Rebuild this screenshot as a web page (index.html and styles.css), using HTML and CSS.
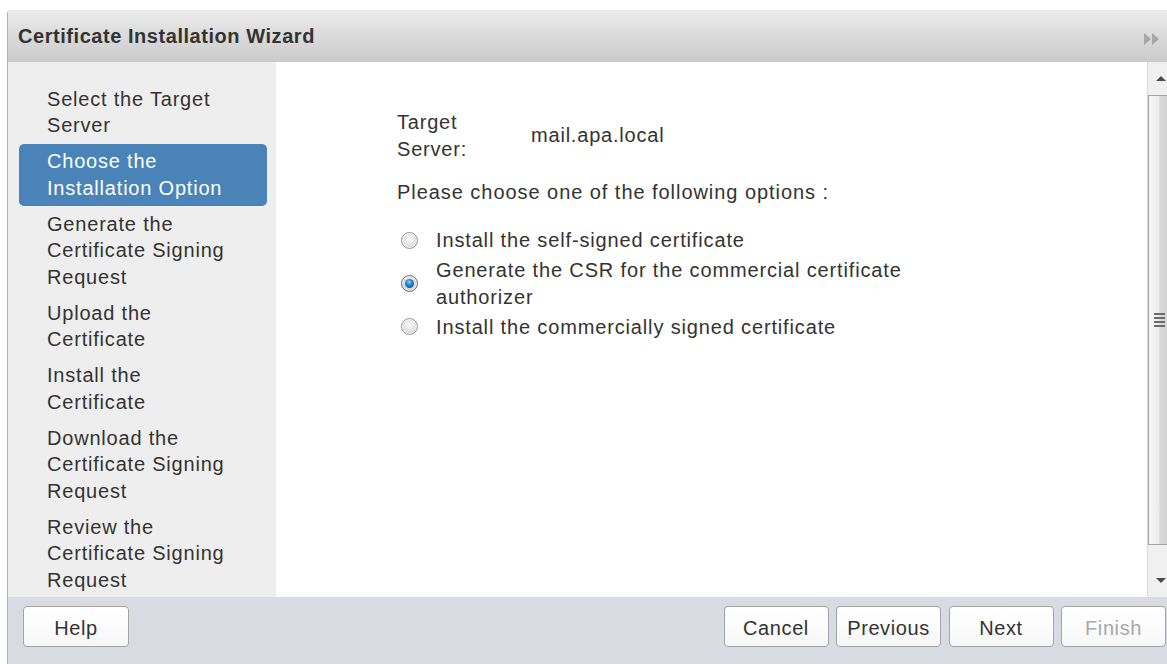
FILE: index.html
```html
<!DOCTYPE html>
<html lang="en">
<head>
<meta charset="utf-8">
<title>Certificate Installation Wizard</title>
<link rel="stylesheet" href="styles.css">
</head>
<body>
<div class="dialog">
  <div class="titlebar">
    <span class="title">Certificate Installation Wizard</span>
    <span class="collapse" aria-hidden="true">
      <svg width="16" height="12" viewBox="0 0 16 12"><path d="M0 0 L7 6 L0 12 Z M8 0 L15 6 L8 12 Z" fill="#a6a6a6"/></svg>
    </span>
  </div>

  <div class="content">
    <ul class="steps">
      <li class="step">Select the Target<br>Server</li>
      <li class="step active">Choose the<br>Installation Option</li>
      <li class="step">Generate the<br>Certificate Signing<br>Request</li>
      <li class="step">Upload the<br>Certificate</li>
      <li class="step">Install the<br>Certificate</li>
      <li class="step">Download the<br>Certificate Signing<br>Request</li>
      <li class="step">Review the<br>Certificate Signing<br>Request</li>
    </ul>

    <div class="main">
      <div class="server-row">
        <div class="server-label">Target<br>Server:</div>
        <div class="server-value">mail.apa.local</div>
      </div>
      <p class="prompt">Please choose one of the following options :</p>
      <div class="options">
        <label class="option"><span class="radio"></span><span class="option-text">Install the self-signed certificate</span></label>
        <label class="option"><span class="radio checked"></span><span class="option-text">Generate the CSR for the commercial certificate authorizer</span></label>
        <label class="option"><span class="radio"></span><span class="option-text">Install the commercially signed certificate</span></label>
      </div>
    </div>

    <div class="scrollbar">
      <div class="scroll-btn"><span class="arrow-up"></span></div>
      <div class="thumb"><span class="grip"><i></i><i></i><i></i><i></i></span></div>
      <div class="track"></div>
      <div class="scroll-btn"><span class="arrow-down"></span></div>
    </div>
  </div>

  <div class="footer">
    <button class="btn help">Help</button>
    <div class="nav-buttons">
      <button class="btn">Cancel</button>
      <button class="btn">Previous</button>
      <button class="btn">Next</button>
      <button class="btn disabled">Finish</button>
    </div>
  </div>
</div>
</body>
</html>
```

FILE: styles.css
```css
html, body {
  margin: 0;
  padding: 0;
  background: #ffffff;
  overflow: hidden;
}

body {
  font-family: "Liberation Sans", Arial, sans-serif;
  font-size: 20px;
  letter-spacing: 0.8px;
  color: #333333;
}

.dialog {
  margin: 10px 0 0 7px;
  width: 1160px;
  height: 654px;
  display: flex;
  flex-direction: column;
  border-left: 1px solid #b4b4b4;
  border-top-left-radius: 4px;
  overflow: hidden;
}

/* title bar */
.titlebar {
  height: 52px;
  flex: none;
  display: flex;
  align-items: center;
  justify-content: space-between;
  padding: 0 8px 0 10px;
  background: linear-gradient(#ececec, #cacaca);
}

.title {
  font-weight: bold;
  font-size: 20px;
  letter-spacing: 0.55px;
  color: #333333;
}

.collapse {
  display: flex;
  margin-top: 6px;
}

/* body: steps / page / scrollbar */
.content {
  height: 535px;
  flex: none;
  display: flex;
}

.steps {
  list-style: none;
  margin: 0;
  width: 248px;
  padding: 19px 9px 0 11px;
  background: #eeeeee;
  flex: none;
}

.step {
  line-height: 26.5px;
  padding: 4.75px 0 4.75px 28px;
  border-radius: 5px;
}

.step.active {
  background: #4a83b7;
  color: #ffffff;
}

.main {
  flex: 1;
  background: #ffffff;
  padding: 47px 0 0 121px;
  line-height: 26.5px;
}

.server-row {
  display: flex;
  align-items: center;
}

.server-label {
  width: 134px;
}

.prompt {
  margin: 17px 0 0;
  letter-spacing: 0.95px;
}

.options {
  margin-top: 21.5px;
  display: flex;
  flex-direction: column;
  gap: 3.5px;
}

.option {
  display: flex;
  align-items: center;
}

.option-text {
  width: 470px;
  letter-spacing: 0.85px;
}

.radio {
  box-sizing: border-box;
  width: 17px;
  height: 17px;
  margin: 0 18px 0 4px;
  flex: none;
  border-radius: 50%;
  border: 1px solid #9a9a9a;
  background: radial-gradient(circle at 50% 40%, #fafafa 0, #e6e6e6 45%, #c4c4c4 100%);
  box-shadow: inset 0 0 0 1px rgba(255, 255, 255, 0.7);
  display: flex;
  align-items: center;
  justify-content: center;
}

.radio.checked {
  border-color: #6e6e6e;
  background: radial-gradient(circle at 50% 40%, #f4f4f4 0, #d8d8d8 55%, #a8a8a8 100%);
}

.radio.checked::after {
  content: "";
  width: 9px;
  height: 9px;
  border-radius: 50%;
  background: radial-gradient(circle at 45% 35%, #8fd0f6 0, #1f86cc 40%, #0c3f72 100%);
}

/* scrollbar */
.scrollbar {
  width: 20px;
  flex: none;
  background: #f0f0f0;
  border-left: 1px solid #dadada;
  display: flex;
  flex-direction: column;
}

.scroll-btn {
  height: 33px;
  flex: none;
  display: flex;
  align-items: center;
  justify-content: flex-end;
  padding-right: 2px;
}

.arrow-up,
.arrow-down {
  width: 0;
  height: 0;
  border-left: 5px solid transparent;
  border-right: 5px solid transparent;
}

.arrow-up {
  border-bottom: 5px solid #4a4a4a;
}

.arrow-down {
  border-top: 5px solid #4a4a4a;
}

.thumb {
  height: 448px;
  flex: none;
  border: 1px solid #a6a6a6;
  border-right: none;
  background: linear-gradient(90deg, #f6f6f6 0, #ededed 50%, #d9d9d9 60%, #d2d2d2 100%);
  display: flex;
  align-items: center;
  justify-content: flex-end;
  padding-right: 3px;
}

.grip {
  display: flex;
  flex-direction: column;
  gap: 2px;
  width: 11px;
}

.grip i {
  display: block;
  height: 2px;
  background: #6a6a6a;
}

.track {
  flex: 1;
}

/* footer */
.footer {
  flex: 1;
  background: #d8dce2;
  display: flex;
  justify-content: space-between;
  align-items: flex-start;
  padding: 9px 2px 0 15px;
}

.nav-buttons {
  display: flex;
  gap: 7.5px;
}

.btn {
  width: 105px;
  height: 41px;
  font-family: "Liberation Sans", Arial, sans-serif;
  font-size: 20px;
  letter-spacing: 0.6px;
  line-height: 43px;
  color: #333333;
  background: linear-gradient(#ffffff, #f7f7f7);
  border: 1px solid #a4a4a4;
  border-radius: 4px;
  padding: 0;
}

.btn.help {
  width: 106px;
}

.btn.disabled {
  color: #a9a9a9;
}
```
